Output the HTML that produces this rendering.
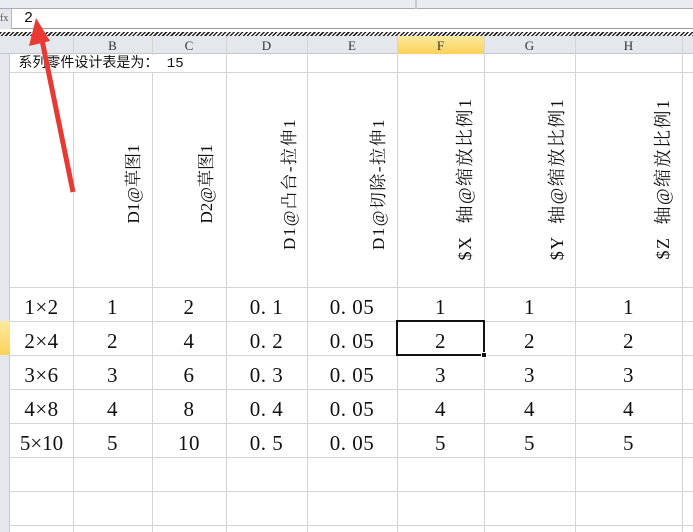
<!DOCTYPE html>
<html><head><meta charset="utf-8"><style>
*{margin:0;padding:0;box-sizing:border-box}
body{width:693px;height:532px;overflow:hidden;background:#fff;position:relative;font-family:"Liberation Serif","Noto Serif CJK SC",serif;color:#111}
.a{position:absolute}
.vl{position:absolute;top:36px;bottom:0;width:1px;background:#d4d4d4}
.hl{position:absolute;left:0;right:0;height:1px;background:#d4d4d4}
.ch{position:absolute;top:36px;height:18px;font-size:13px;text-align:center;line-height:19px;color:#333}
.rot{position:absolute;width:220px;height:20px;margin-left:-110px;margin-top:-10px;transform:rotate(-90deg);font-size:17px;white-space:pre;line-height:20px;text-align:center}
.c{position:absolute;font-size:21px;text-align:center;line-height:34px;padding-top:2px;letter-spacing:0.5px}
</style></head><body>
<div class="a" style="left:0;top:0;width:693px;height:9px;background:#e9ecf0;border-bottom:1px solid #aab"></div>
<div class="a" style="left:415px;top:0;width:2px;height:9px;background:#c8ccd2"></div>
<div class="a" style="left:0;top:9px;width:11px;height:20px;background:#e4e7eb;font-size:10px;color:#555;line-height:20px">fx</div>
<div class="a" style="left:11px;top:9px;width:682px;height:20px;border-left:1px solid #bbb;border-bottom:1px solid #999"></div>
<div class="a" style="left:24px;top:10px;font-size:15px;font-family:'Liberation Mono',monospace">2</div>
<div class="a" style="left:0;top:32px;width:693px;height:4px;background:repeating-linear-gradient(135deg,#222 0 1.5px,#fff 1.5px 3px)"></div>
<div class="a" style="left:0;top:36px;width:693px;height:18px;background:#e4e7ec;border-bottom:1px solid #c4c8ce"></div>
<div class="a" style="left:397px;top:36px;width:87px;height:18px;background:linear-gradient(#fde9a0,#fbd25a)"></div>
<div class="a" style="left:0;top:54px;width:10px;height:478px;background:#e4e7ec;border-right:1px solid #c4c8ce"></div>
<div class="a" style="left:0;top:321px;width:10px;height:34px;background:linear-gradient(#fde9a0,#fbd25a)"></div>
<div class="ch" style="left:73px;width:79px">B</div>
<div class="ch" style="left:152px;width:74px">C</div>
<div class="ch" style="left:226px;width:81px">D</div>
<div class="ch" style="left:307px;width:90px">E</div>
<div class="ch" style="left:397px;width:87px">F</div>
<div class="ch" style="left:484px;width:91px">G</div>
<div class="ch" style="left:575px;width:107px">H</div>
<div class="vl" style="left:73px"></div><div class="vl" style="left:152px"></div><div class="vl" style="left:226px"></div><div class="vl" style="left:307px"></div><div class="vl" style="left:397px"></div><div class="vl" style="left:484px"></div><div class="vl" style="left:575px"></div><div class="vl" style="left:682px"></div>
<div class="hl" style="top:72px;left:10px"></div>
<div class="hl" style="top:287px;left:10px"></div><div class="hl" style="top:321px;left:10px"></div><div class="hl" style="top:355px;left:10px"></div><div class="hl" style="top:389px;left:10px"></div><div class="hl" style="top:423px;left:10px"></div><div class="hl" style="top:457px;left:10px"></div><div class="hl" style="top:491px;left:10px"></div><div class="hl" style="top:525px;left:10px"></div>
<div class="a" style="left:10px;top:55px;height:17px;width:210px;background:#fff;font-size:14px;line-height:18px;font-family:'Liberation Mono','Noto Sans CJK SC',monospace">&nbsp;系列零件设计表是为： 15</div>
<div class="rot" style="left:134px;top:184px">D1@草图1</div>
<div class="rot" style="left:207px;top:184px">D2@草图1</div>
<div class="rot" style="left:290px;top:184px;letter-spacing:1.5px">D1@凸台-拉伸1</div>
<div class="rot" style="left:379px;top:184px;letter-spacing:1.5px">D1@切除-拉伸1</div>
<div class="rot" style="left:465px;top:179px;font-size:18px;letter-spacing:1.5px">$X  轴@缩放比例1</div>
<div class="rot" style="left:557px;top:179px;font-size:18px;letter-spacing:1.5px">$Y  轴@缩放比例1</div>
<div class="rot" style="left:663px;top:179px;font-size:18px;letter-spacing:1.5px">$Z  轴@缩放比例1</div>
<div class="c" style="left:10px;top:288px;width:63px">1×2<br>2×4<br>3×6<br>4×8</div>
<div class="c" style="left:6px;top:424px;width:71px;letter-spacing:0">5×10</div>
<div class="c" style="left:73px;top:288px;width:79px">1<br>2<br>3<br>4<br>5</div>
<div class="c" style="left:152px;top:288px;width:74px">2<br>4<br>6<br>8<br>10</div>
<div class="c" style="left:226px;top:288px;width:81px">0. 1<br>0. 2<br>0. 3<br>0. 4<br>0. 5</div>
<div class="c" style="left:307px;top:288px;width:90px">0. 05<br>0. 05<br>0. 05<br>0. 05<br>0. 05</div>
<div class="c" style="left:397px;top:288px;width:87px">1<br>2<br>3<br>4<br>5</div>
<div class="c" style="left:484px;top:288px;width:91px">1<br>2<br>3<br>4<br>5</div>
<div class="c" style="left:575px;top:288px;width:107px">1<br>2<br>3<br>4<br>5</div>
<div class="a" style="left:396px;top:320px;width:89px;height:36px;border:2px solid #111"></div>
<div class="a" style="left:481px;top:352px;width:6px;height:6px;background:#111;border:1px solid #fff"></div>
<svg class="a" style="left:0;top:0" width="693" height="532"><line x1="73" y1="192" x2="42" y2="40" stroke="#e83a32" stroke-width="5"/><polygon points="36,18 29,46 50,41" fill="#e83a32"/></svg>
</body></html>
